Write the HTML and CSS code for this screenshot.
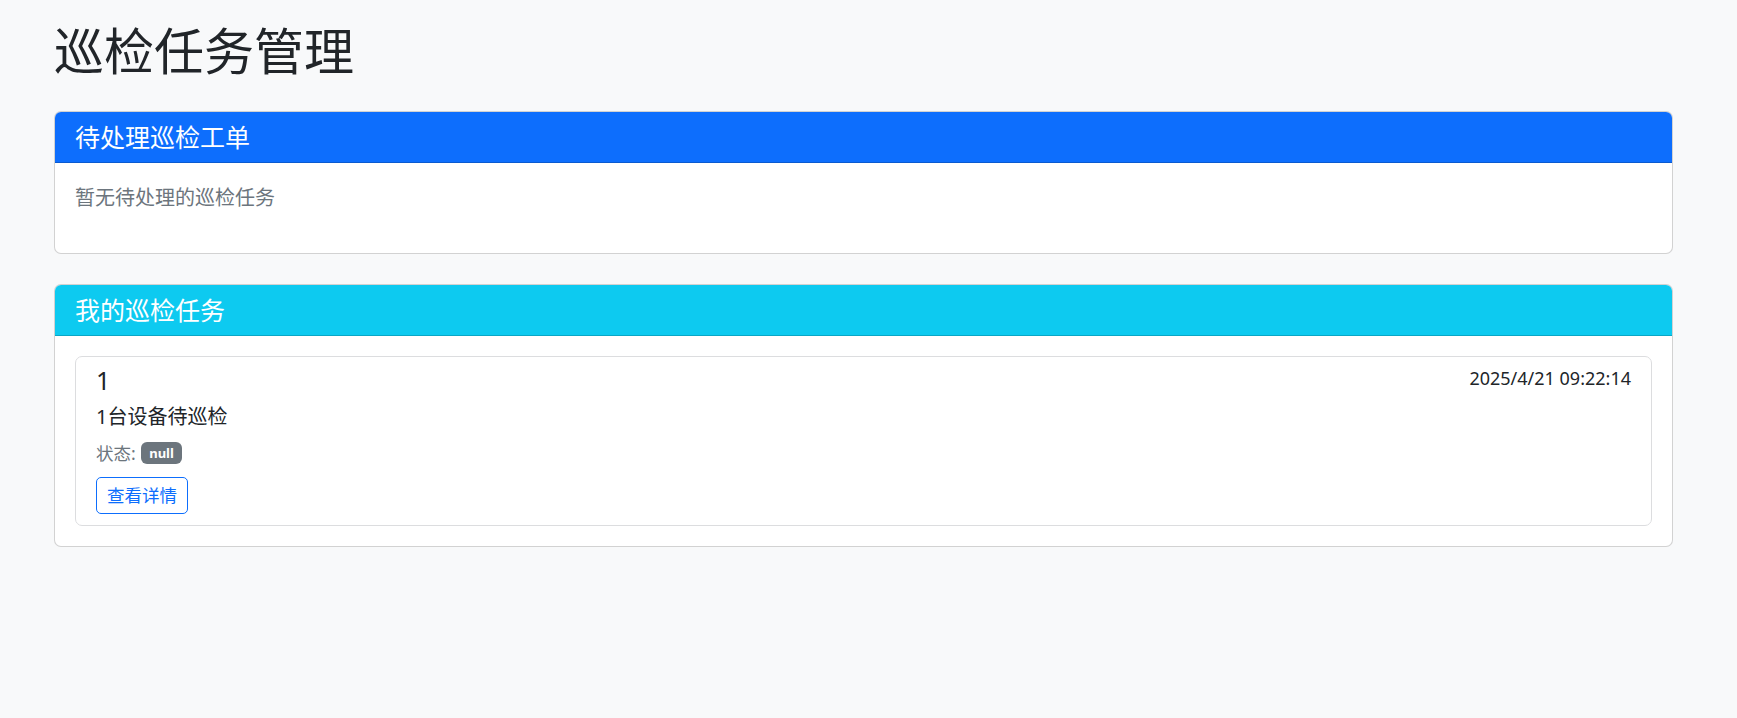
FILE: index.html
```html
<!DOCTYPE html>
<html lang="zh-CN">
<head>
<meta charset="utf-8">
<title>巡检任务管理</title>
<link rel="stylesheet" href="styles.css">
</head>
<body>
<main class="page">
  <h1 class="page-title">巡检任务管理</h1>

  <section class="card">
    <div class="card-header header-primary">
      <h5 class="card-heading">待处理巡检工单</h5>
    </div>
    <div class="card-body">
      <p class="empty">暂无待处理的巡检任务</p>
    </div>
  </section>

  <section class="card">
    <div class="card-header header-info">
      <h5 class="card-heading">我的巡检任务</h5>
    </div>
    <div class="card-body">
      <div class="task">
        <div class="task-top">
          <h5 class="task-title">1</h5>
          <small class="task-date">2025/4/21 09:22:14</small>
        </div>
        <p class="task-desc">1台设备待巡检</p>
        <div class="task-status">
          <span class="status-label">状态:</span>
          <span class="badge">null</span>
        </div>
        <button class="btn-outline" type="button">查看详情</button>
      </div>
    </div>
  </section>
</main>
</body>
</html>
```

FILE: styles.css
```css
* {
  box-sizing: border-box;
}

html, body {
  margin: 0;
  padding: 0;
}

body {
  background: #f8f9fa;
  color: #212529;
  font-family: "Noto Sans", "Noto Sans CJK SC", sans-serif;
  font-size: 20px;
  line-height: 1.5;
}

.page {
  padding: 21px 64px 0 54px;
}

.page-title {
  font-size: 50px;
  font-weight: 400;
  line-height: 60px;
  margin: 0 0 30px;
  color: #212529;
}

.card {
  background: #fff;
  border: 1px solid rgba(0, 0, 0, 0.175);
  border-radius: 7px;
  margin-bottom: 30px;
  overflow: hidden;
}

.card-header {
  padding: 10px 20px;
  border-bottom: 1px solid rgba(0, 0, 0, 0.175);
  color: #fff;
}

.header-primary {
  background: #0d6efd;
}

.header-info {
  background: #0dcaf0;
}

.card-heading {
  margin: 0;
  font-size: 25px;
  font-weight: 400;
  line-height: 30px;
}

.card-body {
  padding: 20px;
}

.empty {
  margin: 0 0 20px;
  color: #6c757d;
  line-height: 30px;
}

.task {
  border: 1px solid #dcdddf;
  border-radius: 7px;
  padding: 8px 20px 11px;
  display: flex;
  flex-direction: column;
  align-items: flex-start;
}

.task-top {
  align-self: stretch;
  display: flex;
  justify-content: space-between;
  align-items: flex-start;
}

.task-title {
  margin: 0;
  font-size: 25px;
  font-weight: 400;
  line-height: 30px;
}

.task-date {
  font-size: 18px;
  line-height: 26px;
  color: #212529;
}

.task-desc {
  margin: 7px 0 0;
  line-height: 30px;
}

.task-status {
  margin-top: 8px;
  display: flex;
  align-items: center;
  gap: 5px;
  font-size: 17.5px;
  line-height: 26px;
}

.status-label {
  color: #6c757d;
}

.badge {
  display: inline-block;
  background: #6c757d;
  color: #fff;
  font-size: 13px;
  font-weight: 700;
  line-height: 1;
  padding: 4.6px 8.5px;
  border-radius: 6px;
}

.btn-outline {
  margin-top: 11px;
  font-family: inherit;
  font-size: 17.5px;
  line-height: 25px;
  padding: 5px 10px;
  color: #0d6efd;
  background: transparent;
  border: 1px solid #0d6efd;
  border-radius: 5px;
  cursor: pointer;
}
```
